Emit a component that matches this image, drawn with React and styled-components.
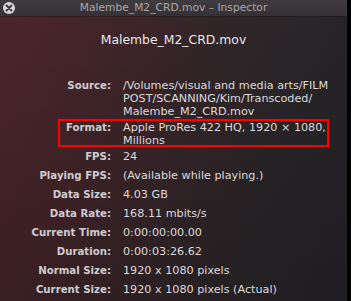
import styled, { createGlobalStyle } from 'styled-components';

const GlobalStyle = createGlobalStyle`
  html, body {
    margin: 0;
    padding: 0;
    background: #000;
  }
  body {
    font-family: "DejaVu Sans", "Liberation Sans", sans-serif;
  }
`

const Window = styled.div`
  width: 347px;
  height: 301px;
  overflow: hidden;
  display: flex;
  flex-direction: column;
  background:
    linear-gradient(180deg, rgba(0,0,0,0) 0%, rgba(0,0,0,0.18) 100%),
    linear-gradient(100deg, #4c2629 0%, #43252a 25%, #352629 50%, #2a2629 75%, #252328 100%);
`

const TitleBar = styled.div`
  position: relative;
  height: 16px;
  flex: none;
  display: flex;
  align-items: center;
  justify-content: center;
  background: linear-gradient(180deg, #403b3e 0%, #363134 100%);
  box-shadow: 0 1px 0 rgba(0,0,0,0.25);
`

const CloseButton = styled.div`
  position: absolute;
  left: 3px;
  top: 2px;
  width: 12px;
  height: 12px;
  border-radius: 50%;
  background: #d6d6d6;
  display: flex;
  align-items: center;
  justify-content: center;
`

const TitleText = styled.div`
  font-size: 10.7px;
  line-height: 16px;
  color: #a9a7aa;
`

const Heading = styled.div`
  margin-top: 16px;
  text-align: center;
  font-size: 12.4px;
  line-height: 16px;
  color: #e8e6e8;
`

const Rows = styled.div`
  margin-top: 31px;
  display: flex;
  flex-direction: column;
  gap: 3px;
`

const Row = styled.div`
  position: relative;
  display: grid;
  grid-template-columns: 111px 1fr;
  column-gap: 12px;
  min-height: 16px;
  align-items: start;
  ${({highlighted}) => highlighted ? `
    &::after {
      content: '';
      position: absolute;
      left: 58px;
      right: 18px;
      top: -2px;
      bottom: 0;
      border: 2px solid #ff0000;
      pointer-events: none;
    }
  ` : ''}
`

const Label = styled.div`
  text-align: right;
  font-weight: bold;
  font-size: 10.2px;
  line-height: 13px;
  color: #cfcccf;
  white-space: nowrap;
`

const Value = styled.div`
  font-size: 11.2px;
  line-height: 13px;
  color: #dcdadc;
  white-space: nowrap;
`

const rowsArr = [
  { label: 'Source:', lines: ['/Volumes/visual and media arts/FILM', 'POST/SCANNING/Kim/Transcoded/', 'Malembe_M2_CRD.mov'] },
  { label: 'Format:', lines: ['Apple ProRes 422 HQ, 1920 × 1080,', 'Millions'], highlighted: true },
  { label: 'FPS:', lines: ['24'] },
  { label: 'Playing FPS:', lines: ['(Available while playing.)'] },
  { label: 'Data Size:', lines: ['4.03 GB'] },
  { label: 'Data Rate:', lines: ['168.11 mbits/s'] },
  { label: 'Current Time:', lines: ['0:00:00:00.00'] },
  { label: 'Duration:', lines: ['0:00:03:26.62'] },
  { label: 'Normal Size:', lines: ['1920 x 1080 pixels'] },
  { label: 'Current Size:', lines: ['1920 x 1080 pixels (Actual)'] },
]

const App = () => {
  return (
    <>
      <GlobalStyle/>
      <Window>
        <TitleBar>
          <CloseButton>
            <svg width="8" height="8" viewBox="0 0 8 8">
              <path d="M1.5 1.5 L6.5 6.5 M6.5 1.5 L1.5 6.5" stroke="#3a3638" strokeWidth="1.8" strokeLinecap="round"/>
            </svg>
          </CloseButton>
          <TitleText>Malembe_M2_CRD.mov – Inspector</TitleText>
        </TitleBar>
        <Heading>Malembe_M2_CRD.mov</Heading>
        <Rows>
          {rowsArr.map((item, index) => (
            <Row key={index} highlighted={item.highlighted}>
              <Label>{item.label}</Label>
              <Value>
                {item.lines.map((line, i) => <div key={i}>{line}</div>)}
              </Value>
            </Row>
          ))}
        </Rows>
      </Window>
    </>
  )
}

export default App
